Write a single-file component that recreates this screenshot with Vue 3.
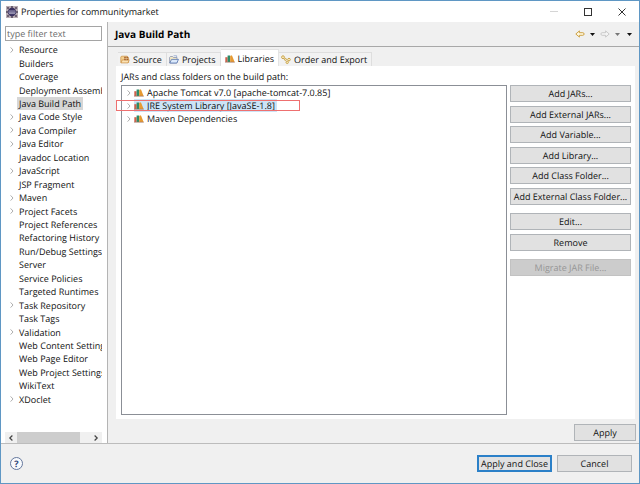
<script setup>
import { ref } from 'vue'

const filter = ref('')
const selectedPage = ref('Java Build Path')
const selectedLibrary = ref(1)
const activeTab = ref('Libraries')

const pages = [
  ['Resource', true], ['Builders'], ['Coverage'], ['Deployment Assembly'], ['Java Build Path'],
  ['Java Code Style', true], ['Java Compiler', true], ['Java Editor', true], ['Javadoc Location'],
  ['JavaScript', true], ['JSP Fragment'], ['Maven', true], ['Project Facets', true],
  ['Project References'], ['Refactoring History'], ['Run/Debug Settings'], ['Server'],
  ['Service Policies'], ['Targeted Runtimes'], ['Task Repository', true], ['Task Tags'],
  ['Validation', true], ['Web Content Settings'], ['Web Page Editor'], ['Web Project Settings'],
  ['WikiText'], ['XDoclet', true],
].map(([name, expandable]) => ({ name, expandable }))

const tabs = ['Source', 'Projects', 'Libraries', 'Order and Export']
const libraries = [
  'Apache Tomcat v7.0 [apache-tomcat-7.0.85]',
  'JRE System Library [JavaSE-1.8]',
  'Maven Dependencies',
]
const actions = [
  { label: 'Add JARs...' },
  { label: 'Add External JARs...' },
  { label: 'Add Variable...' },
  { label: 'Add Library...' },
  { label: 'Add Class Folder...' },
  { label: 'Add External Class Folder...' },
  { label: 'Edit...', apart: true },
  { label: 'Remove' },
  { label: 'Migrate JAR File...', apart: true, disabled: true },
]
</script>

<template>
  <div class="window">
    <header class="titlebar">
      <svg class="app-icon" viewBox="0 0 12 12" aria-hidden="true">
        <rect width="12" height="12" fill="#b9adb4" />
        <path d="M1 1h2v2H1zM5 0h2v2H5zM9 1h2v2H9zM0 5h2v2H0zM10 5h2v2h-2zM1 9h2v2H1zM5 10h2v2H5zM9 9h2v2H9z" fill="#6d6272" />
        <circle cx="6" cy="6" r="4.2" fill="#3a3160" />
        <path d="M2.600 5h6.800M2.400 6.300h7.200M3 7.600h6" stroke="#c9c5dc" stroke-width=".7" />
      </svg>
      <h1>Properties for communitymarket</h1>
      <div class="window-controls">
        <button aria-label="Minimize" disabled><svg viewBox="0 0 8 8"><path d="M0 3.500h8" stroke="#d5d5d5" /></svg></button>
        <button aria-label="Maximize"><svg viewBox="0 0 8 8"><rect x=".5" y=".5" width="7" height="7" fill="none" stroke="#333" /></svg></button>
        <button aria-label="Close"><svg viewBox="0 0 8 8"><path d="M.5.5l7 7M7.500.5l-7 7" stroke="#333" /></svg></button>
      </div>
    </header>

    <div class="body">
      <aside class="sidebar">
        <input v-model="filter" class="filter" type="text" placeholder="type filter text" aria-label="Filter pages" />
        <ul class="pages">
          <li v-for="page in pages" :key="page.name">
            <svg v-if="page.expandable" class="chevron" viewBox="0 0 4 6"><path d="M.6.4L3 3 .6 5.6" /></svg>
            <span v-else class="chevron"></span>
            <button class="page" :class="{ selected: page.name === selectedPage }" @click="selectedPage = page.name">{{ page.name }}</button>
          </li>
        </ul>
        <div class="scrollbar">
          <button aria-label="Scroll left"><svg viewBox="0 0 4 6"><path d="M3.400.5L.8 3l2.600 2.500" /></svg></button>
          <div class="track"><div class="thumb"></div></div>
          <button aria-label="Scroll right"><svg viewBox="0 0 4 6"><path d="M.6.5L3.200 3 .6 5.500" /></svg></button>
        </div>
      </aside>

      <main class="main">
        <div class="page-head">
          <h2>Java Build Path</h2>
          <nav class="history">
            <button aria-label="Back"><svg class="arrow" viewBox="0 0 10 8"><path d="M.8 4L4.400.9v1.800h3.400q1.300 0 1.300 1.300T7.800 5.300H4.400v1.800z" fill="#fff8df" stroke="#c99a35" stroke-width=".9" /></svg></button>
            <button aria-label="Back history"><svg class="caret" viewBox="0 0 5 3"><path d="M0 0h5L2.500 3z" fill="#111" /></svg></button>
            <button aria-label="Forward" disabled><svg class="arrow" viewBox="0 0 10 8"><path d="M9.200 4L5.600.9v1.800H2.200Q.9 2.700.9 4t1.300 1.300h3.400v1.800z" fill="#f5f5f5" stroke="#c4c4c4" stroke-width=".9" /></svg></button>
            <button aria-label="Forward history"><svg class="caret" viewBox="0 0 5 3"><path d="M0 0h5L2.500 3z" fill="#777" /></svg></button>
            <button aria-label="Menu"><svg class="caret menu" viewBox="0 0 5 3"><path d="M0 0h5L2.500 3z" fill="#111" /></svg></button>
          </nav>
        </div>

        <div class="tabs" role="tablist">
          <button v-for="tab in tabs" :key="tab" role="tab" class="tab" :class="{ active: tab === activeTab }" :aria-selected="tab === activeTab" @click="activeTab = tab">
            <svg v-if="tab === 'Source'" class="icon" viewBox="0 0 10 9">
              <path d="M.8 7.500V2.200Q.8 1.200 2 1.200h5.200L8.600 3v4.500z" fill="#f4cf8e" stroke="#d09a50" stroke-width=".8" />
              <path d="M1 7.900l1.300-3h6.900L8 7.900z" fill="#fbe3b5" stroke="#c88c40" stroke-width=".7" />
              <rect x="4.200" y="1.800" width="4" height="3.400" fill="#a5622c" />
              <path d="M6.200 1.800v3.400M4.200 3.500h4" stroke="#f6dcae" stroke-width=".5" />
            </svg>
            <svg v-else-if="tab === 'Projects'" class="icon" viewBox="0 0 10 9">
              <path d="M.6 8V2.400l.8-.9h2.200l.8 1H8V8z" fill="#f3e8c4" stroke="#8a94b0" stroke-width=".8" />
              <path d="M.8 8l1.700-3.600h7L7.800 8z" fill="#dbe9fb" stroke="#5574b0" stroke-width=".8" />
              <path d="M4.600.7h3v2" fill="none" stroke="#8ba0cc" stroke-width=".7" />
            </svg>
            <svg v-else-if="tab === 'Libraries'" class="icon" viewBox="0 0 10 9">
              <path d="M.3 3.200h2.300V8H.3z" fill="#d0604c" /><path d="M2.600 1.500h2.600V8H2.600z" fill="#2d8b68" />
              <path d="M5.200 2l1.700-.8L9.600 8H5.200z" fill="#e79a32" /><path d="M0 8.200h9.800" stroke="#9b6f5c" stroke-width=".7" />
            </svg>
            <svg v-else class="icon" viewBox="0 0 10 9">
              <g fill="#fff5cf" stroke="#c39a3a" stroke-width=".9"><circle cx="2" cy="2.200" r="1.400" /><circle cx="4.400" cy="4.400" r="1" /><circle cx="8" cy="4.600" r="1.300" /><circle cx="6.200" cy="7.300" r="1.200" /></g>
            </svg>
            <span>{{ tab }}</span>
          </button>
        </div>

        <section class="panel">
          <p id="list-label">JARs and class folders on the build path:</p>
          <div class="columns">
            <ul class="libraries" aria-labelledby="list-label">
              <li v-for="(library, i) in libraries" :key="library">
                <svg class="chevron" viewBox="0 0 4 6"><path d="M.6.4L3 3 .6 5.600" /></svg>
                <button class="library" :class="{ selected: i === selectedLibrary }" @click="selectedLibrary = i">
                  <svg class="icon" viewBox="0 0 10 9">
                    <path d="M.3 3.200h2.300V8H.3z" fill="#d0604c" /><path d="M2.600 1.500h2.600V8H2.600z" fill="#2d8b68" />
                    <path d="M5.200 2l1.700-.8L9.600 8H5.200z" fill="#e79a32" /><path d="M0 8.200h9.800" stroke="#9b6f5c" stroke-width=".7" />
                  </svg>
                  <span>{{ library }}</span>
                </button>
                <span v-if="i === selectedLibrary" class="highlight"></span>
              </li>
            </ul>
            <div class="actions">
              <button v-for="action in actions" :key="action.label" class="push" :class="{ apart: action.apart }" :disabled="action.disabled">{{ action.label }}</button>
            </div>
          </div>
        </section>

        <div class="apply-row"><button class="push apply">Apply</button></div>
      </main>
    </div>

    <footer class="footer">
      <button class="help" aria-label="Help">?</button>
      <button class="push primary">Apply and Close</button>
      <button class="push">Cancel</button>
    </footer>
  </div>
</template>

<style>
body { margin: 0; }
</style>

<style scoped>
* { box-sizing: border-box; }
.window {
  display: flex; flex-direction: column; min-height: 100vh;
  border: 1px solid #5f97c4; background: #f0f0f0; color: #111;
  font: 9px/13px "Open Sans", "Noto Sans", sans-serif;
  text-rendering: geometricPrecision;
}
button { margin: 0; padding: 0; border: 0; background: none; color: inherit; font: inherit; text-rendering: inherit; white-space: nowrap; }
h1, h2, p, ul { margin: 0; padding: 0; list-style: none; }
svg { display: block; flex: none; overflow: visible; }

.titlebar { display: flex; align-items: center; height: 21px; padding-left: 5px; background: #fff; }
.app-icon { width: 12px; height: 12px; }
h1 { flex: 1; margin-left: 3px; font-size: 9px; font-weight: 400; }
.window-controls { display: flex; gap: 1px; padding-right: 1px; }
.window-controls button { display: grid; place-items: center; width: 33px; height: 20px; }
.window-controls svg { width: 8px; height: 8px; }

.body { flex: 1; display: flex; min-height: 0; }
.sidebar { display: flex; flex-direction: column; width: 107px; flex: none; background: #fff; border-right: 1px solid #b4b4b4; padding: 4px 5px 0 4px; }
.filter { width: 100%; height: 15px; padding: 0 1px; border: 1px solid #a5a5a5; border-radius: 0; background: #fff; font: inherit; text-rendering: inherit; color: inherit; outline: 0; }
.filter::placeholder { color: #6b6b6b; opacity: 1; }
.pages { flex: 1; display: grid; grid-auto-rows: 1fr; padding: 2px 0 26px; overflow: hidden; }
.pages li { display: flex; align-items: center; gap: 3px; padding-left: 5px; min-width: 0; }
.chevron { width: 4px; height: 6px; flex: none; fill: none; stroke: #999; stroke-width: .8; }
.page { padding: 0 2px; }
.page.selected { background: #d6d6d6; }
.scrollbar { display: flex; height: 11px; background: #f0f0f0; }
.scrollbar button { display: grid; place-items: center; width: 12px; }
.scrollbar svg { width: 4px; height: 6px; fill: none; stroke: #444; stroke-width: 1.2; }
.track { flex: 1; display: flex; }
.thumb { width: 86%; background: #cdcdcd; }

.main { flex: 1; min-width: 0; display: flex; flex-direction: column; }
.page-head { display: flex; align-items: center; justify-content: space-between; height: 25px; padding: 0 7px; border-bottom: 1px solid #a8a8a8; }
h2 { font-size: 10px; font-weight: 700; color: #000; }
.history { display: flex; align-items: center; gap: 5px; }
.arrow { width: 10px; height: 8px; }
.caret { width: 5px; height: 3px; }
.menu { margin-left: 2px; }

.tabs { display: flex; align-items: flex-end; height: 19px; padding-left: 10px; }
.tab { display: flex; align-items: center; gap: 3px; height: 14px; padding: 0 4px 0 2px; border: 1px solid #dedede; border-width: 1px 1px 0 0; background: #f2f2f2; }
.tab.active { height: 17px; padding: 0 4px; border-color: #e4e4e4; background: #fff; }
.icon { width: 10px; height: 9px; }

.panel { flex: 1; display: flex; flex-direction: column; margin: 0 4px 0 8px; padding: 4px 4px 4px 5px; background: #fff; }
#list-label { height: 15px; }
.columns { flex: 1; display: flex; gap: 3px; }
.libraries { flex: 1; border: 1px solid #8b8f96; }
.libraries li { position: relative; display: flex; align-items: center; gap: 3px; padding-left: 5px; }
.library { display: flex; align-items: center; gap: 3px; padding-right: 2px; }
.library.selected { background: #cce4f7; }
.highlight { position: absolute; left: -6px; top: 1px; width: 184px; height: 11px; border: 1px solid #ee7070; pointer-events: none; }

.actions { display: flex; flex-direction: column; justify-content: space-between; width: 121px; height: 191px; }
.push { height: 17px; border: 1px solid #b0b4b8; background: #e1e1e1; line-height: 15px; text-align: center; }
.push.apart { margin-top: 5px; }
.push:disabled { border-color: #c2c2c2; background: #cccccc; color: #969696; }
.apply-row { display: flex; justify-content: flex-end; padding: 5px 3px 2px; }
.apply { width: 62px; }

.footer { display: flex; align-items: center; gap: 5px; height: 40px; padding: 0 7px 0 9px; border-top: 1px solid #bcbcbc; }
.footer .push { width: 75px; }
.footer .primary { border: 2px solid #2b80c8; line-height: 13px; }
.help { width: 13px; height: 13px; margin-right: auto; border: 1px solid #64779c; border-radius: 50%; background: #f8fafd; color: #2f4778; font-weight: 700; line-height: 11px; }
</style>
